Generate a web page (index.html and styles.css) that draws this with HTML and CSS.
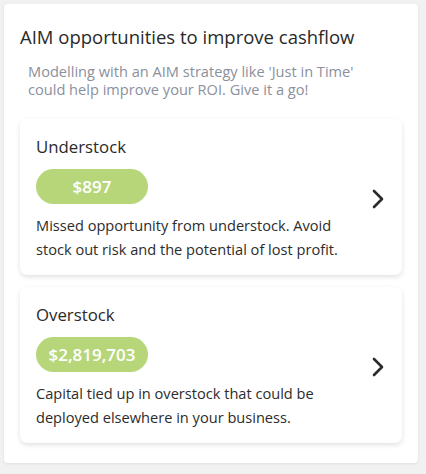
FILE: index.html
```html
<!DOCTYPE html>
<html>
<head>
<meta charset="utf-8">
<link rel="stylesheet" href="styles.css">
</head>
<body>
<div class="panel">
  <h2 class="title">AIM opportunities to improve cashflow</h2>
  <p class="intro">Modelling with an AIM strategy like 'Just in Time' could help improve your ROI. Give it a go!</p>
  <div class="item">
    <div class="item-body">
      <div class="item-title">Understock</div>
      <div class="pill">$897</div>
      <p class="item-desc">Missed opportunity from understock. Avoid stock out risk and the potential of lost profit.</p>
    </div>
    <svg class="chev" width="12" height="20" viewBox="0 0 12 20"><path d="M2 2 L10 10 L2 18" fill="none" stroke="#2b2b2b" stroke-width="2.6" stroke-linecap="round" stroke-linejoin="round"/></svg>
  </div>
  <div class="item">
    <div class="item-body">
      <div class="item-title">Overstock</div>
      <div class="pill">$2,819,703</div>
      <p class="item-desc">Capital tied up in overstock that could be deployed elsewhere in your business.</p>
    </div>
    <svg class="chev" width="12" height="20" viewBox="0 0 12 20"><path d="M2 2 L10 10 L2 18" fill="none" stroke="#2b2b2b" stroke-width="2.6" stroke-linecap="round" stroke-linejoin="round"/></svg>
  </div>
</div>
</body>
</html>
```
FILE: styles.css
```css
html, body { margin: 0; padding: 0; }
body {
  background: #f1f1f1;
  font-family: "Open Sans", Lato, sans-serif;
  color: #2c2c2c;
  padding: 4px;
  width: 414px;
}
.panel {
  background: #fff;
  border-radius: 4px;
  box-shadow: 0 1px 3px rgba(0,0,0,0.08);
  padding: 20px 16px 20px 16px;
}
.title {
  margin: 0;
  font-size: 18.5px;
  font-weight: 400;
  line-height: 26px;
  color: #2a2a2a;
}
.intro {
  margin: 12px 30px 21px 8px;
  font-size: 14.6px;
  line-height: 18px;
  color: #8b909c;
}
.item {
  display: flex;
  align-items: center;
  background: #fff;
  border-radius: 7px;
  box-shadow: 0 2px 5px rgba(0,0,0,0.12);
  padding: 18px 18px 14px 16px;
  margin-bottom: 12px;
}
.item:last-child { margin-bottom: 0; }
.item-body { flex: 1; }
.item-title {
  font-size: 16.8px;
  line-height: 20px;
  color: #2a2a2a;
}
.pill {
  margin-top: 12px;
  width: 112px;
  height: 35px;
  border-radius: 18px;
  background: #b6d679;
  color: #fff;
  font-weight: 600;
  font-size: 17px;
  display: flex;
  align-items: center;
  justify-content: center;
}
.item-desc {
  margin: 9px 0 0 0;
  font-size: 14.6px;
  line-height: 24px;
  color: #2c2c2c;
}
.chev { flex: none; margin-left: 12px; }
```
